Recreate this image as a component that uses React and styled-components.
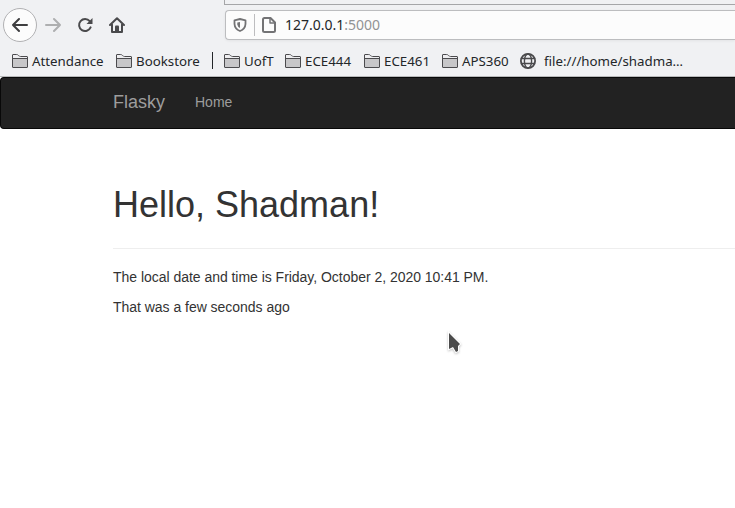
import React from "react";
import styled, { createGlobalStyle } from "styled-components";

const GlobalStyle = createGlobalStyle`
  * { box-sizing: border-box; }
  body { margin: 0; background: #fff; overflow: hidden; }
`;

const Window = styled.div`
  position: relative;
  width: 735px;
  height: 508px;
  overflow: hidden;
  background: #fff;
`;

const Chrome = styled.header`
  height: 77px;
  background: #f0f1f3;
  border-bottom: 1px solid #b8b9ba;
  font-family: "Noto Sans", sans-serif;
  color: #232629;
`;

const TabStrip = styled.div`
  height: 5px;
  margin-left: 224px;
  border-left: 1px solid #a5a6a8;
  border-bottom: 1px solid #a5a6a8;
`;

const Toolbar = styled.div`
  display: flex;
  align-items: center;
  height: 40px;
  padding-left: 3px;
`;

const BackButton = styled.div`
  width: 34px;
  height: 34px;
  border: 1px solid #b1b1b3;
  border-radius: 50%;
  background: #fcfcfc;
  display: flex;
  align-items: center;
  justify-content: center;
`;

const ToolButton = styled.div`
  width: 32px;
  height: 32px;
  display: flex;
  align-items: center;
  justify-content: center;
`;

const UrlBar = styled.div`
  flex: 1;
  height: 30px;
  margin-left: 92px;
  display: flex;
  align-items: center;
  padding-left: 7px;
  background: #fcfcfc;
  border: 1px solid #bcbdbf;
  border-right: 0;
  border-radius: 4px 0 0 4px;
  box-shadow: 0 1px 3px rgba(0, 0, 0, 0.06);
`;

const UrlDivider = styled.span`
  width: 1px;
  height: 22px;
  margin: 0 7px;
  background: #bdbdbf;
`;

const Address = styled.span`
  margin-left: 8px;
  font-size: 14px;
  line-height: 20px;
`;

const Port = styled.span`
  color: #929394;
`;

const Bookmarks = styled.nav`
  display: flex;
  align-items: center;
  height: 31px;
  padding-left: 12px;
`;

const Bookmark = styled.div`
  flex: none;
  display: flex;
  align-items: center;
  gap: ${(p) => p.$gap || 4}px;
  width: ${(p) => p.$width}px;
  font-size: 13.3px;
  line-height: 18px;
  white-space: nowrap;
`;

const BookmarkDivider = styled.span`
  width: 1px;
  height: 17px;
  margin-right: 11px;
  background: #232629;
`;

const Navbar = styled.nav`
  display: flex;
  align-items: center;
  height: 52px;
  padding: 0 0 2px 112px;
  background: #222;
  border: 1px solid #080808;
  border-right: 0;
  border-radius: 4px 0 0 4px;
  font-family: "Liberation Sans", Arial, sans-serif;
  color: #9d9d9d;
`;

const Brand = styled.span`
  width: 82px;
  font-size: 18px;
  line-height: 20px;
`;

const NavLink = styled.span`
  font-size: 14px;
  line-height: 20px;
`;

const Content = styled.main`
  margin: 56px 0 0 113px;
  font-family: "Liberation Sans", Arial, sans-serif;
  color: #333;
`;

const Heading = styled.h1`
  margin: 0 0 18px;
  padding-bottom: 23px;
  border-bottom: 1px solid #eee;
  font-size: 36px;
  line-height: 40px;
  font-weight: 500;
`;

const Paragraph = styled.p`
  margin: 0 0 10px;
  font-size: 14px;
  line-height: 20px;
  letter-spacing: -0.03px;
`;

const Pointer = styled.svg`
  position: absolute;
  left: 444px;
  top: 329px;
  filter: drop-shadow(0 1px 1px rgba(0, 0, 0, 0.25));
`;

const Icon = styled.svg`
  display: block;
  flex: none;
`;

const Svg = (props) => (
  <Icon width="16" height="16" viewBox="0 0 16 16" fill="none" stroke="#4a4a4c" strokeWidth="2" strokeLinecap="round" strokeLinejoin="round" {...props} />
);

const Arrow = ({ color, right }) => (
  <Svg stroke={color}>
    <path d={right ? "M1 8H15M9 2L15 8L9 14" : "M15 8H1M7 2L1 8L7 14"} />
  </Svg>
);

const Reload = () => (
  <Svg>
    <path d="M13.6 10.4A6 6 0 1 1 12.7 4.2" />
    <path d="M15.5 1V7H9.5Z" fill="#4a4a4c" stroke="none" />
  </Svg>
);

const Home = () => (
  <Svg>
    <path d="M1 8L8 1.2L15 8M3 7.5V15H13V7.5" />
    <path d="M6 14V9.5Q6 8.5 7 8.5H9Q10 8.5 10 9.5V14Z" fill="#4a4a4c" stroke="none" />
  </Svg>
);

const Shield = () => (
  <Svg width="14" height="14" viewBox="0 0 14 14" stroke="#737375" strokeWidth="1.8">
    <path d="M7 1L12.5 2.3V6Q12.2 11 7 13Q1.8 11 1.5 6V2.3Z" />
    <path d="M7 4L4.3 4.5V6.5Q4.6 8.8 7 10Z" fill="#737375" stroke="none" />
  </Svg>
);

const Page = () => (
  <Svg width="15" viewBox="1 0 15 16" stroke="#737375">
    <path d="M4 1H9.5L14 5.5V13.5Q14 15 12.5 15H3.5Q2 15 2 13.5V2.5Q2 1 3.5 1" />
    <path d="M9 1V6H14" strokeWidth="1.5" />
  </Svg>
);

const Folder = () => (
  <Svg height="14" viewBox="0 0 16 14" stroke="#4b4b4e" strokeWidth="1" strokeLinecap="butt">
    <path d="M.5 13V1Q.5 .5 1 .5H4.5Q5.5 .5 6.5 1.5T8.5 2.5H15Q15.5 2.5 15.5 3V13Q15.5 13.5 15 13.5H1Q.5 13.5 .5 13Z" fill="#c7c7c9" />
    <path d="M1 1H4.5Q5.5 1 6.5 2T8.5 3H15V4H1Z" fill="#eeeef0" stroke="none" />
    <path d="M1 4.5H15" />
  </Svg>
);

const Globe = () => (
  <Svg strokeWidth="1.4">
    <circle cx="8" cy="8" r="7.1" strokeWidth="1.8" />
    <ellipse cx="8" cy="8" rx="3.6" ry="7" />
    <path d="M1.5 5.5H14.5M1.5 10.5H14.5" />
  </Svg>
);

const firstFolders = [
  ["Attendance", 104],
  ["Bookstore", 96],
];
const courseFolders = [
  ["UofT", 61],
  ["ECE444", 79],
  ["ECE461", 78],
  ["APS360", 78],
];

const FolderLink = ({ label, width }) => (
  <Bookmark $width={width}>
    <Folder />
    <span>{label}</span>
  </Bookmark>
);

export default function App() {
  return (
    <Window>
      <GlobalStyle />
      <Chrome>
        <TabStrip />
        <Toolbar>
          <BackButton><Arrow color="#3e3e40" /></BackButton>
          <ToolButton><Arrow color="#aeafb0" right /></ToolButton>
          <ToolButton><Reload /></ToolButton>
          <ToolButton><Home /></ToolButton>
          <UrlBar>
            <Shield />
            <UrlDivider />
            <Page />
            <Address>127.0.0.1<Port>:5000</Port></Address>
          </UrlBar>
        </Toolbar>
        <Bookmarks>
          {firstFolders.map(([label, width]) => <FolderLink key={label} label={label} width={width} />)}
          <BookmarkDivider />
          {courseFolders.map(([label, width]) => <FolderLink key={label} label={label} width={width} />)}
          <Bookmark $gap={8} $width={180}>
            <Globe />
            <span>file:///home/shadma…</span>
          </Bookmark>
        </Bookmarks>
      </Chrome>
      <Navbar>
        <Brand>Flasky</Brand>
        <NavLink>Home</NavLink>
      </Navbar>
      <Content>
        <Heading>Hello, Shadman!</Heading>
        <Paragraph>The local date and time is Friday, October 2, 2020 10:41 PM.</Paragraph>
        <Paragraph>That was a few seconds ago</Paragraph>
      </Content>
      <Pointer width="22" height="28" viewBox="0 0 22 28">
        <path d="M5 4V20L9 18L12 23L14 22V17L16 15Z" fill="#4b4b4b" stroke="#fff" strokeWidth="2" paintOrder="stroke" />
      </Pointer>
    </Window>
  );
}
